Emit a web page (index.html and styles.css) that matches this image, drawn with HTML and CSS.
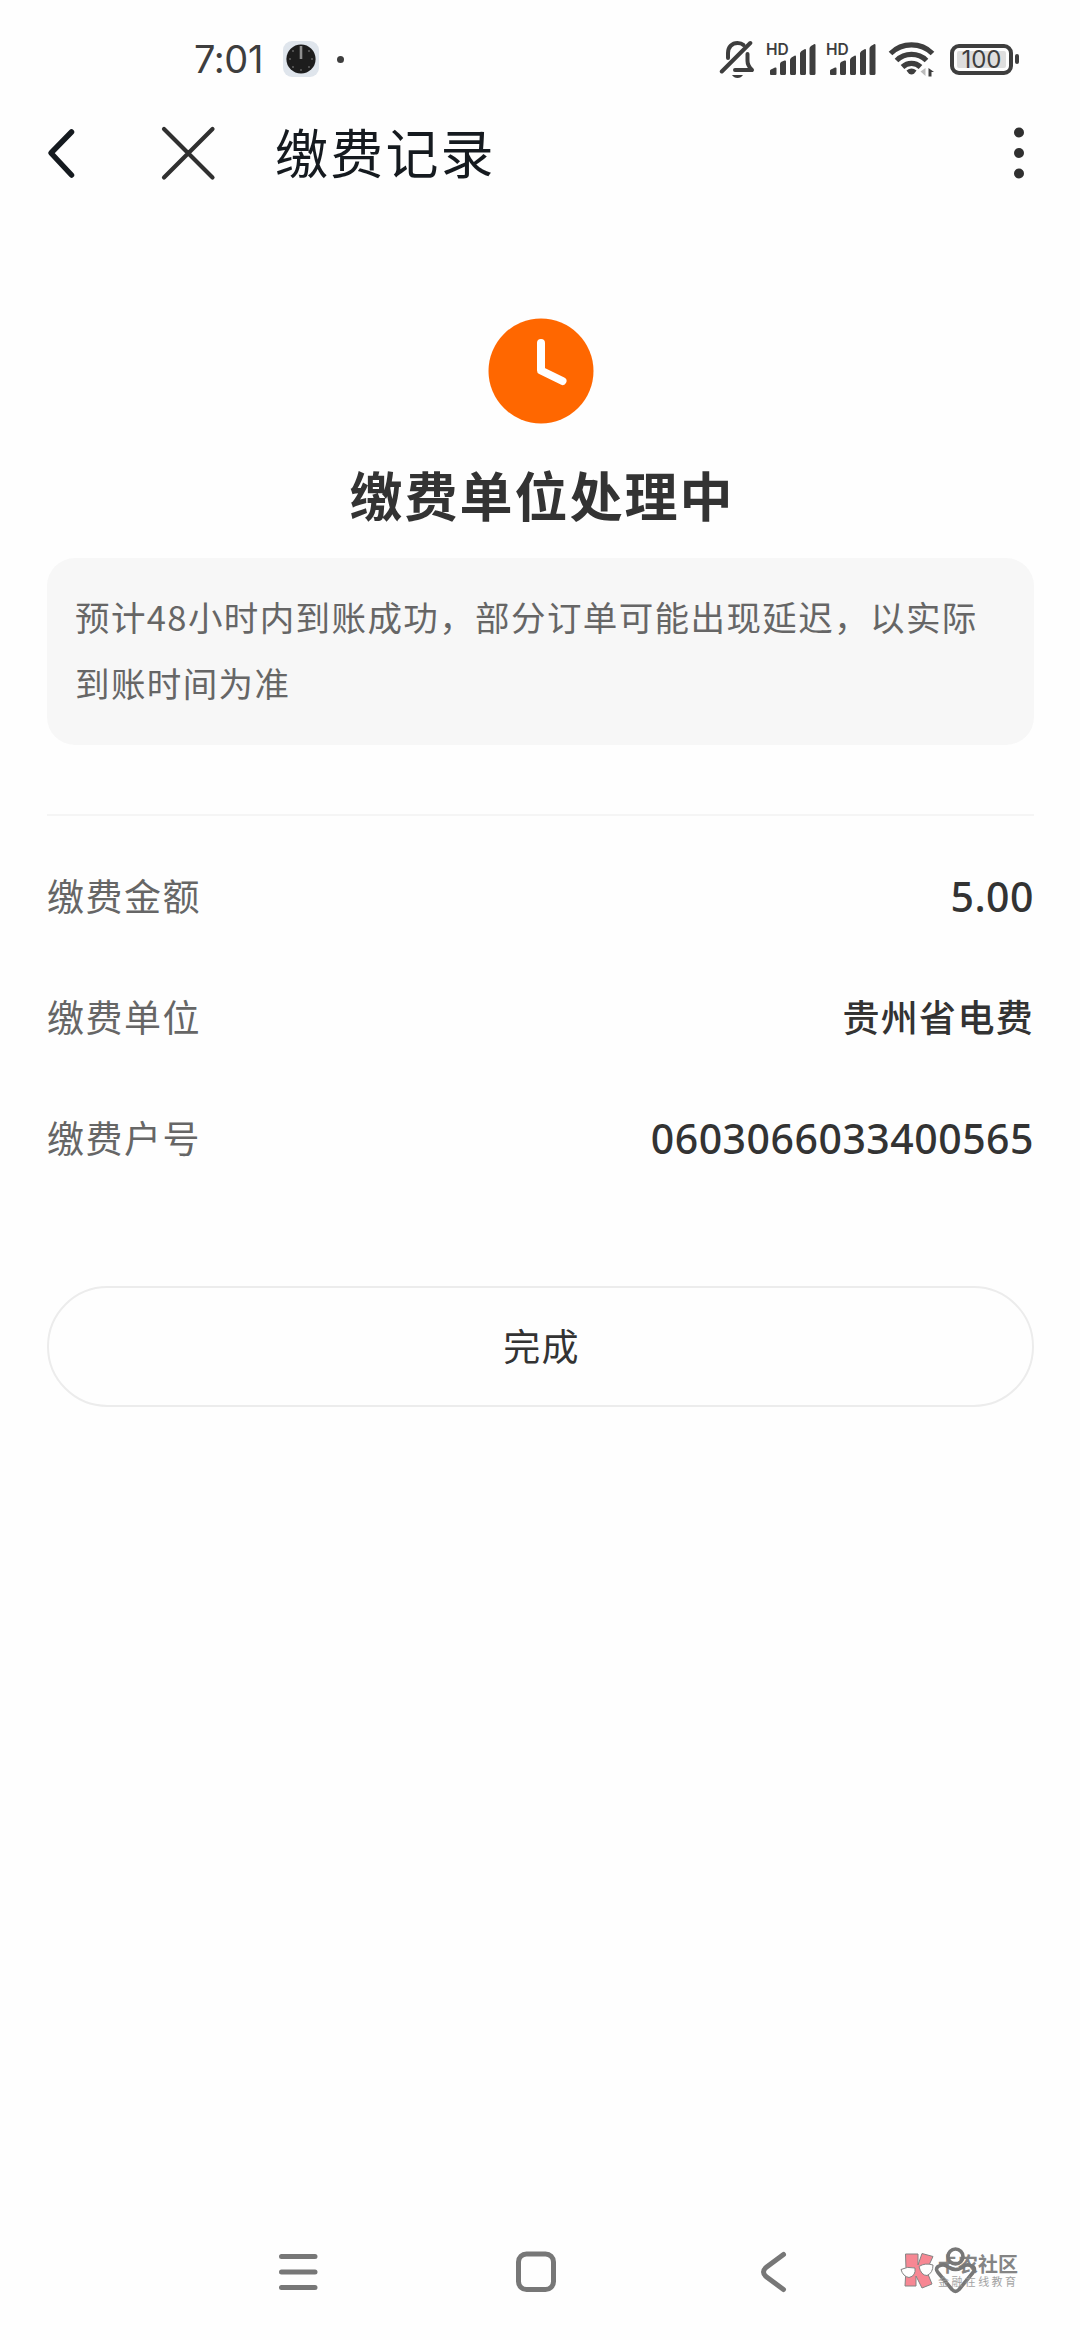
FILE: index.html
```html
<!DOCTYPE html>
<html lang="zh-CN">
<head>
<meta charset="utf-8">
<title>缴费记录</title>
<link rel="stylesheet" href="styles.css">
</head>
<body>
<div class="screen">
  <div class="status">
    <div class="status-left">
      <span class="time">7:01</span>
      <svg class="app-clock" width="38" height="38" viewBox="282 40 38 38">
        <rect x="283" y="41" width="36" height="36" rx="9" fill="#dfe5ec"/>
        <circle cx="301" cy="59" r="14.6" fill="#1d1d1d"/>
        <path d="M301 46v13" stroke="#8e8e8e" stroke-width="2.6"/>
        <g fill="#aaa"><circle cx="312" cy="59" r=".7"/><circle cx="290" cy="59" r=".7"/><circle cx="301" cy="70" r=".7"/><circle cx="293" cy="51" r=".7"/><circle cx="309" cy="51" r=".7"/><circle cx="293" cy="67" r=".7"/><circle cx="309" cy="67" r=".7"/></g>
      </svg>
      <span class="dot"></span>
    </div>
    <div class="status-right">
      <svg width="36" height="40" viewBox="718 39 36 40" fill="none" stroke="#3e3e3e" stroke-width="4" stroke-linecap="round" stroke-linejoin="round">
        <path d="M727 58v-5c0-6 4-10 9.500-10 2.500 0 4.500.6 6 2M746.500 54v7c0 3 1.500 6 4.500 9H734"/>
        <path d="M720.800 71.500 749.300 43"/>
        <path d="M731 75h11c-1.300 2-3 3-5.500 3s-4.200-1-5.500-3z" fill="#3e3e3e" stroke="none"/>
      </svg>
      <svg class="signal" width="52" height="44" viewBox="0 -4 52 44">
        <text class="hd" x="0" y="14">HD</text>
        <g fill="#3e3e3e"><path d="M4 33v-3.500a3 3 0 0 1 2-1.500l3-1.500q1.500-.5 1.500 1v5.500a1 1 0 0 1-1 1H5q-1 0-1-1zM14 23q0-1.500 1.500-2.200l3-1.300q1.500-.5 1.500 1V32.500q0 1.500-1.500 1.500h-3Q14 34 14 32.500zM24 19q0-1.500 1.500-2.500l3-1.800q1.500-.5 1.500 1V32.500q0 1.500-1.500 1.500h-3q-1.500 0-1.500-1.500zM34 12.500q0-1.500 1.500-2.500l3-1.800q1.500-.5 1.500 1V32.500q0 1.500-1.500 1.500h-3q-1.500 0-1.500-1.500zM43.500 7.500q0-1.500 1.500-2.500l3-1.800q1.500-.5 1.500 1V32.500q0 1.500-1.500 1.500h-3q-1.500 0-1.500-1.500z"/></g>
      </svg>
      <svg class="signal second" width="52" height="44" viewBox="0 -4 52 44">
        <text class="hd" x="0" y="14">HD</text>
        <g fill="#3e3e3e"><path d="M4 33v-3.500a3 3 0 0 1 2-1.500l3-1.500q1.500-.5 1.500 1v5.500a1 1 0 0 1-1 1H5q-1 0-1-1zM14 23q0-1.500 1.500-2.200l3-1.300q1.500-.5 1.500 1V32.500q0 1.500-1.500 1.500h-3Q14 34 14 32.500zM24 19q0-1.500 1.500-2.500l3-1.800q1.500-.5 1.500 1V32.500q0 1.500-1.500 1.500h-3q-1.500 0-1.500-1.500zM34 12.500q0-1.500 1.500-2.500l3-1.800q1.500-.5 1.500 1V32.500q0 1.500-1.500 1.500h-3q-1.500 0-1.500-1.500zM43.500 7.500q0-1.500 1.500-2.500l3-1.800q1.500-.5 1.500 1V32.500q0 1.500-1.500 1.500h-3q-1.500 0-1.500-1.500z"/></g>
      </svg>
      <svg class="wifi" width="50" height="38" viewBox="886 41 50 38" fill="none" stroke="#3e3e3e" stroke-width="5.200">
        <path d="M889.500 54.500a30 30 0 0 1 42 0M895.500 61.500a21.500 21.500 0 0 1 30 0M901.500 68a13 13 0 0 1 18 0"/>
        <path d="M905.500 71.500q5-4 10 0l-2.500 3.200q-2.500 1.600-5 0z" fill="#3e3e3e" stroke="none"/>
        <path d="M924.500 69v8l-5-4.500z" fill="#bbb" stroke="none"/>
        <path d="M927.500 69l5.500 4h-2.500v4.500h-3z" fill="#3e3e3e" stroke="none"/>
      </svg>
      <div class="battery"><span class="level">100</span><span class="cap"></span></div>
    </div>
  </div>

  <div class="header">
    <svg width="30" height="52" viewBox="46 127.500 30 52" fill="none" stroke="#151a1f" stroke-width="5.500" stroke-linecap="round" stroke-linejoin="round"><path d="M71.500 132.500 51 153.500l20.500 22"/></svg>
    <svg class="close" width="56" height="56" viewBox="160 125 56 56" fill="none" stroke="#303030" stroke-width="4.200" stroke-linecap="round"><path d="m164 129 48.500 48.500M212.500 129 164 177.500"/></svg>
    <h1 class="title">缴费记录</h1>
    <svg class="more" width="12" height="54" viewBox="0 0 12 54" fill="#303030"><circle cx="6" cy="6.500" r="5"/><circle cx="6" cy="27" r="5"/><circle cx="6" cy="47.500" r="5"/></svg>
  </div>

  <div class="content">
    <svg class="pending" width="106" height="106" viewBox="0 0 106 106"><circle cx="53" cy="53" r="52.500" fill="#ff6700"/><path d="M53 25v27.500l21.500 10.500" fill="none" stroke="#fff" stroke-width="8" stroke-linecap="round" stroke-linejoin="round"/></svg>
    <h2 class="state">缴费单位处理中</h2>
    <p class="note">预计48小时内到账成功，部分订单可能出现延迟，以实际到账时间为准</p>
    <div class="details">
      <div class="row"><span class="label">缴费金额</span><span class="num">5.00</span></div>
      <div class="row"><span class="label">缴费单位</span><span class="value">贵州省电费</span></div>
      <div class="row"><span class="label">缴费户号</span><span class="num">0603066033400565</span></div>
    </div>
    <button class="done">完成</button>
  </div>

  <div class="nav">
    <svg width="40" height="44" viewBox="278 2250 40 44" stroke="#777" stroke-width="5" stroke-linecap="round"><path d="M281.500 2256.500h33.500M281.500 2272h33.500M281.500 2287.500h33.500"/></svg>
    <svg width="44" height="44" viewBox="514 2250 44 44" fill="none" stroke="#777" stroke-width="5"><rect x="518.500" y="2254" width="35" height="35.500" rx="8"/></svg>
    <svg width="28" height="44" viewBox="760 2250 28 44" fill="none" stroke="#777" stroke-width="5" stroke-linecap="round"><path d="m783.500 2254.500-17.500 13q-5 4.500 0 9l17.500 13"/></svg>
    <div class="corner">
      <svg class="gesture" width="44" height="48" viewBox="934 2246 44 48" fill="none" stroke="#777" stroke-width="3.600" stroke-linejoin="round"><circle cx="955.500" cy="2256.500" r="7.500"/><path d="M938 2266.500q-3 2.500 0 6l14 17q3.500 3.500 7 0l14-17q3-3.500 0-6-7-3.500-10 .5-7.500 5-15 0-4-4-10-.5z"/></svg>
      <div class="brand">
        <svg width="36" height="38" viewBox="900 2251 36 38" stroke="#777" stroke-width="1"><path d="M905.500 2254h12.500v11l4-11.500 11 3-6.500 14 5.500 13.500-10 4-6-12v10h-11l1-17z" fill="#f77b88"/><path d="M901 2269.500q6-3.500 14-1.500 1 8-6 9.500-6-1-8-8zM919 2266.500q6-4 14-1.500 0 8-6 10.500-6 0-8-9z" fill="#fff"/></svg>
        <div class="brand-text"><span class="brand-name">卡农社区</span><span class="brand-sub">金融在线教育</span></div>
      </div>
    </div>
  </div>
</div>
</body>
</html>
```

FILE: styles.css
```css
* { box-sizing: border-box; }
body { margin: 0; background: #fefefe; }
.screen {
  width: 1080px;
  height: 2340px;
  display: flex;
  flex-direction: column;
  overflow: hidden;
  font-family: "Noto Sans CJK SC", sans-serif;
  color: #333;
}

.status { display: flex; justify-content: space-between; height: 118px; padding: 0 61px 0 194px; }
.status-left, .status-right { display: flex; align-items: center; height: 118px; }
.time { width: 88px; font: 400 38px/118px Inter, sans-serif; letter-spacing: -.4px; color: #3e3e3e; }
.dot { width: 7px; height: 7px; margin-left: 17px; border-radius: 50%; background: #3e3e3e; }
.signal { margin-left: 11px; }
.signal.second { margin-left: 8px; }
.hd { font: 600 15.5px Inter, sans-serif; fill: #3e3e3e; }
.wifi { margin-left: 9px; }
.battery { display: flex; align-items: center; margin-left: 13px; gap: 2px; }
.level {
  width: 63px;
  height: 31px;
  border: 4px solid #3e3e3e;
  border-radius: 9px;
  background: #dedede;
  box-shadow: inset 0 0 0 3px #fefefe;
  font: 400 24px/23px Inter, sans-serif;
  text-align: center;
  color: #3e3e3e;
}
.cap { width: 4px; height: 10px; border-radius: 2px; background: #3e3e3e; }

.header { display: flex; align-items: center; height: 70px; padding: 0 55px 0 46px; }
.close { margin-left: 84px; }
.title { margin: -4px 0 0 59px; font-size: 53px; line-height: 70px; font-weight: 400; letter-spacing: 2.2px; color: #151a1f; }
.more { margin-left: auto; }

.content { display: flex; flex-direction: column; flex: 1; padding: 130px 46px 0 47px; }
.pending { align-self: center; }
.state { margin: 30px 0 0; padding-left: 3px; font-size: 53px; line-height: 80px; font-weight: 700; letter-spacing: 2px; text-align: center; }
.note {
  margin: 24px 0 0;
  height: 187px;
  padding: 24.5px 28px;
  border-radius: 28px;
  background: #f7f7f7;
  font-size: 34.5px;
  line-height: 66px;
  letter-spacing: 1.4px;
  color: #666;
}
.details { margin-top: 69px; padding-top: 18px; border-top: 2px solid #f5f5f5; }
.row { display: flex; align-items: center; justify-content: space-between; height: 121px; }
.label { font-size: 37px; letter-spacing: 1.5px; color: #666; }
.value { font-size: 37px; font-weight: 500; letter-spacing: 1.3px; }
.num { padding-top: 2px; font-family: "Noto Sans", sans-serif; font-size: 41px; font-weight: 500; letter-spacing: .5px; }
.done {
  height: 121px;
  margin-top: 89px;
  padding: 0 0 4px 2px;
  border: 2px solid #ececec;
  border-radius: 61px;
  background: transparent;
  font: 400 37px "Noto Sans CJK SC", sans-serif;
  letter-spacing: 1.3px;
  color: #333;
}

.nav { display: grid; grid-template-columns: 236px 246px 140px 180px; height: 136px; padding-left: 278px; align-items: center; }
.corner { position: relative; width: 124px; height: 48px; }
.gesture { position: absolute; left: 34px; top: -2px; }
.brand { position: absolute; left: 0; top: 3px; display: flex; gap: 2px; opacity: .9; }
.brand-text { display: flex; flex-direction: column; padding-top: 2px; }
.brand-name { font-size: 20px; line-height: 21px; font-weight: 700; color: #777; white-space: nowrap; }
.brand-sub { font-size: 11px; line-height: 14px; letter-spacing: 2.4px; color: #999; white-space: nowrap; }
```
